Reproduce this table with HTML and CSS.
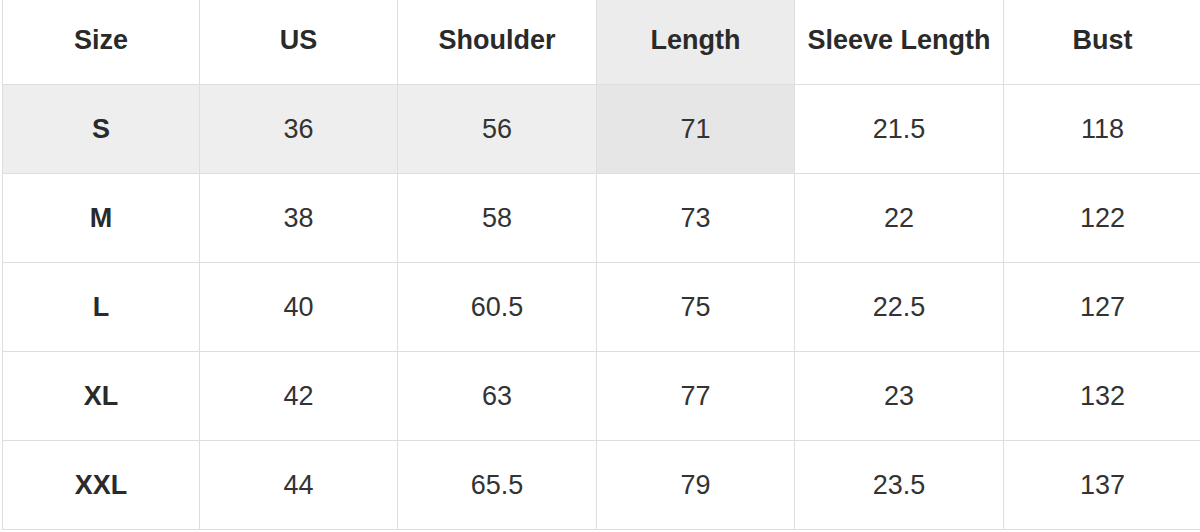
FILE: index.html
```html
<!DOCTYPE html>
<html>
<head>
<meta charset="utf-8">
<link rel="stylesheet" href="styles.css">
</head>
<body>
<table class="size-table">
  <colgroup>
    <col class="c1"><col class="c2"><col class="c3"><col class="c4"><col class="c5"><col class="c6">
  </colgroup>
  <thead>
    <tr>
      <th>Size</th><th>US</th><th>Shoulder</th><th class="hl-head">Length</th><th>Sleeve Length</th><th>Bust</th>
    </tr>
  </thead>
  <tbody>
    <tr class="hl-row">
      <td class="size">S</td><td>36</td><td>56</td><td class="hl-cross">71</td><td class="plain">21.5</td><td class="plain">118</td>
    </tr>
    <tr>
      <td class="size">M</td><td>38</td><td>58</td><td>73</td><td>22</td><td>122</td>
    </tr>
    <tr>
      <td class="size">L</td><td>40</td><td>60.5</td><td>75</td><td>22.5</td><td>127</td>
    </tr>
    <tr>
      <td class="size">XL</td><td>42</td><td>63</td><td>77</td><td>23</td><td>132</td>
    </tr>
    <tr>
      <td class="size">XXL</td><td>44</td><td>65.5</td><td>79</td><td>23.5</td><td>137</td>
    </tr>
  </tbody>
</table>
</body>
</html>
```
FILE: styles.css
```css
html, body {
  margin: 0;
  padding: 0;
  background: #ffffff;
  overflow: hidden;
}

.size-table {
  border-collapse: collapse;
  table-layout: fixed;
  width: 1199px;
  margin: -5px 0 0 2px;
  font-family: "Liberation Sans", Arial, sans-serif;
  font-size: 27px;
  color: #333333;
}

.c1 { width: 197px; }
.c2 { width: 198px; }
.c3 { width: 199px; }
.c4 { width: 198px; }
.c5 { width: 209px; }
.c6 { width: 198px; }

.size-table tr {
  height: 89px;
}

.size-table th,
.size-table td {
  border: 1px solid #dedede;
  text-align: center;
  vertical-align: middle;
  padding: 0;
  white-space: nowrap;
}

.size-table th {
  font-weight: bold;
  color: #2a2a2a;
}

.size-table td.size {
  font-weight: bold;
  color: #2a2a2a;
}

.size-table th.hl-head {
  background: #ececec;
}

.hl-row td {
  background: #eeeeee;
}

.hl-row td.hl-cross {
  background: #e6e6e6;
}

.hl-row td.plain {
  background: #ffffff;
}
```
